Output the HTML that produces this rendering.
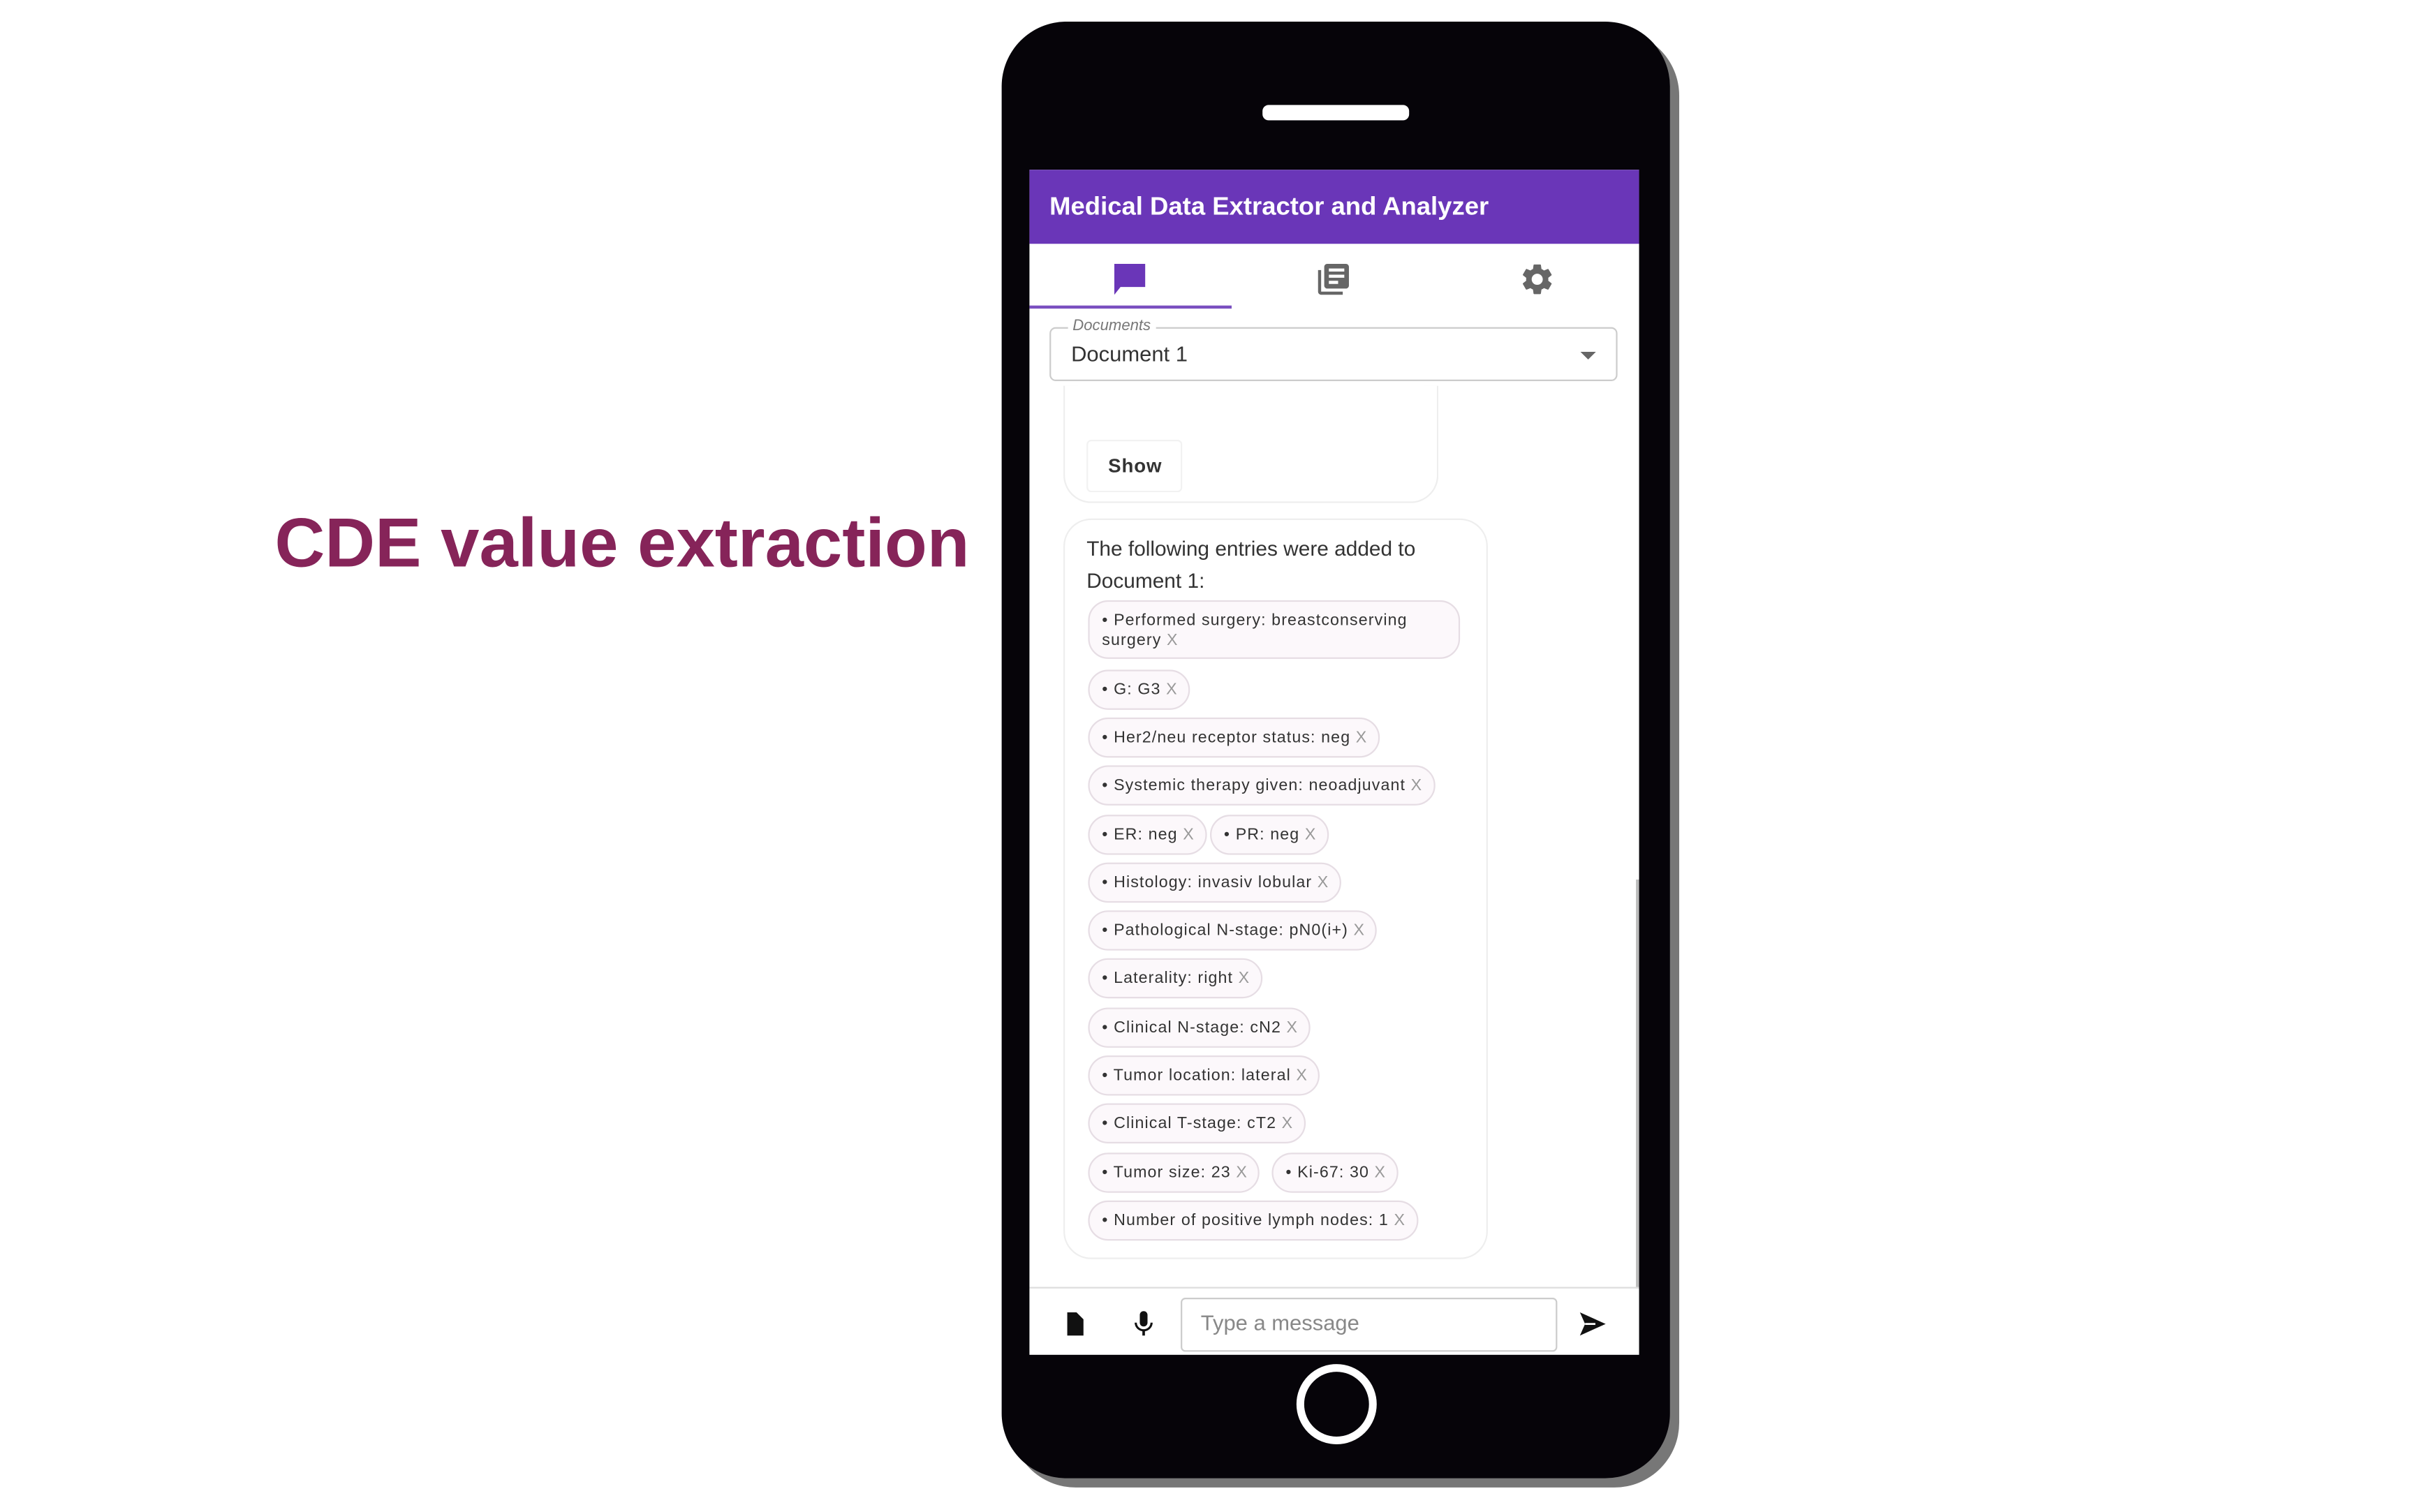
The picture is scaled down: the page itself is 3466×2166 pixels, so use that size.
<!DOCTYPE html>
<html><head><meta charset="utf-8"><style>
html,body{margin:0;padding:0;background:#fff;width:3466px;height:2160px;overflow:hidden}
#w{position:absolute;left:0;top:0;width:1570px;height:980px;transform:scale(2.2105);transform-origin:0 0;font-family:"Liberation Sans",Arial,sans-serif}
.a{position:absolute}
.chip{position:absolute;left:705px;height:24px;border:1px solid #e6dde4;background:#fcf8fb;border-radius:13px;font-size:10.5px;color:#333;line-height:24px;padding:0 7px 0 8px;white-space:nowrap;letter-spacing:.5px}
.chip i{font-style:normal;color:#999}
</style></head><body><div id="w">
<div class="a" style="left:178px;top:326px;font-size:45px;font-weight:bold;color:#862459;white-space:nowrap">CDE value extraction</div>
<div class="a" style="left:655px;top:20px;width:433px;height:944px;border-radius:42px;background:#777"></div>
<div class="a" style="left:649px;top:14px;width:433px;height:944px;border-radius:42px;background:#060409"></div>
<div class="a" style="left:818px;top:68px;width:95px;height:10px;border-radius:4px;background:#fff"></div>
<div class="a" style="left:840px;top:884px;width:42px;height:42px;border-radius:50%;border:5px solid #fff"></div>
<div class="a" style="left:667px;top:110px;width:395px;height:768px;background:#fff;overflow:hidden">
 <div class="a" style="left:0;top:0;width:395px;height:48px;background:#6a36b8"></div>
 <div class="a" style="left:13px;top:15px;color:#fff;font-size:16.5px;font-weight:bold;white-space:nowrap">Medical Data Extractor and Analyzer</div>
 <svg class="a" style="left:53px;top:59px" width="24" height="24" viewBox="0 0 24 24"><path d="M2 2h20v15H6l-4 5z" fill="#6a36b8"/></svg>
 <svg class="a" style="left:185px;top:59px" width="24" height="24" viewBox="0 0 24 24"><path d="M4 6H2v14c0 1.1.9 2 2 2h14v-2H4V6zm16-4H8c-1.1 0-2 .9-2 2v12c0 1.1.9 2 2 2h12c1.1 0 2-.9 2-2V4c0-1.1-.9-2-2-2zm-1 9H9V9h10v2zm-4 4H9v-2h6v2zm4-8H9V5h10v2z" fill="#666"/></svg>
 <svg class="a" style="left:317px;top:59px" width="24" height="24" viewBox="0 0 24 24"><path d="M19.14 12.94c.04-.3.06-.61.06-.94 0-.32-.02-.64-.07-.94l2.030-1.58c.18-.14.23-.41.12-.61l-1.92-3.32c-.12-.22-.37-.29-.59-.22l-2.39.96c-.5-.38-1.03-.7-1.62-.94l-.36-2.54c-.04-.24-.24-.41-.48-.41h-3.84c-.24 0-.43.17-.47.41l-.36 2.54c-.59.24-1.13.57-1.62.94l-2.39-.96c-.22-.08-.47 0-.59.22L2.74 8.87c-.12.21-.08.47.12.61l2.03 1.58c-.05.3-.09.63-.09.94s.02.64.07.94l-2.030 1.58c-.18.14-.23.41-.12.61l1.92 3.32c.12.22.37.29.59.22l2.39-.96c.5.38 1.03.7 1.62.94l.36 2.54c.05.24.24.41.48.41h3.84c.24 0 .44-.17.47-.41l.36-2.54c.59-.24 1.13-.56 1.62-.94l2.39.96c.22.08.47 0 .59-.22l1.92-3.32c.12-.22.07-.47-.12-.61l-2.01-1.58zM12 15.6c-1.98 0-3.6-1.62-3.6-3.6s1.62-3.6 3.6-3.6 3.6 1.62 3.6 3.6-1.62 3.6-3.6 3.6z" fill="#666"/></svg>
 <div class="a" style="left:0;top:88px;width:131px;height:2px;background:#7a4fc0"></div>
 <div class="a" style="left:13px;top:102px;width:366px;height:33px;border:1px solid #ccc;border-radius:4px"></div>
 <div class="a" style="left:25px;top:96px;background:#fff;padding:0 3px;font-size:10px;font-style:italic;color:#777">Documents</div>
 <div class="a" style="left:27px;top:111px;font-size:14px;color:#333">Document 1</div>
 <div class="a" style="left:357px;top:118px;width:0;height:0;border-left:5px solid transparent;border-right:5px solid transparent;border-top:5px solid #666"></div>
 <div class="a" style="left:22px;top:140px;width:241px;height:75px;border:1px solid #eee;border-top:none;border-radius:0 0 18px 18px"></div>
 <div class="a" style="left:37px;top:175px;width:60px;height:32px;border:1px solid #f2f2f2;border-radius:3px;font-size:12.5px;font-weight:bold;color:#333;line-height:32px;text-indent:13px;letter-spacing:.4px">Show</div>
 <div class="a" style="left:22px;top:226px;width:273px;height:478px;border:1px solid #eee;border-radius:18px"></div>
 <div class="a" style="left:37px;top:235px;font-size:13.5px;color:#333;line-height:21px;width:250px">The following entries were added to Document 1:</div>
 <div class="a" style="left:393px;top:460px;width:2px;height:265px;background:#bbb"></div>
 <div class="a" style="left:0;top:724px;width:395px;height:1px;background:#ddd"></div>
 <svg class="a" style="left:20px;top:738px" width="18" height="20" viewBox="0 0 24 24"><path d="M6 2h8l6 6v14H6z" fill="#111"/></svg>
 <svg class="a" style="left:64px;top:737px" width="20" height="22" viewBox="0 0 24 24"><path d="M12 14c1.7 0 3-1.3 3-3V5c0-1.7-1.3-3-3-3S9 3.3 9 5v6c0 1.7 1.3 3 3 3zm5.3-3c0 3-2.5 5.1-5.3 5.1S6.7 14 6.7 11H5c0 3.4 2.7 6.2 6 6.7V21h2v-3.3c3.3-.5 6-3.3 6-6.7h-1.7z" fill="#111"/></svg>
 <div class="a" style="left:98px;top:731px;width:242px;height:33px;border:1px solid #ccc;border-radius:3px"></div>
 <div class="a" style="left:111px;top:739px;font-size:14px;color:#888">Type a message</div>
 <svg class="a" style="left:354px;top:738px" width="22" height="20" viewBox="0 0 24 24"><path d="M2 3l20 9-20 9 4-9z" fill="#111"/><path d="M6 12h8" stroke="#fff" stroke-width="1.5"/></svg>
</div>
<div class="chip" style="top:389px;height:38px;line-height:13px;padding-top:6px;box-sizing:border-box;width:241px;white-space:normal">• Performed surgery: breastconserving surgery <i>X</i></div>
<div class="chip" style="top:434px">• G: G3 <i>X</i></div>
<div class="chip" style="top:465px">• Her2/neu receptor status: neg <i>X</i></div>
<div class="chip" style="top:496px">• Systemic therapy given: neoadjuvant <i>X</i></div>
<div class="chip" style="top:528px">• ER: neg <i>X</i></div>
<div class="chip" style="top:528px;left:784px">• PR: neg <i>X</i></div>
<div class="chip" style="top:559px">• Histology: invasiv lobular <i>X</i></div>
<div class="chip" style="top:590px">• Pathological N-stage: pN0(i+) <i>X</i></div>
<div class="chip" style="top:621px">• Laterality: right <i>X</i></div>
<div class="chip" style="top:653px">• Clinical N-stage: cN2 <i>X</i></div>
<div class="chip" style="top:684px">• Tumor location: lateral <i>X</i></div>
<div class="chip" style="top:715px">• Clinical T-stage: cT2 <i>X</i></div>
<div class="chip" style="top:747px">• Tumor size: 23 <i>X</i></div>
<div class="chip" style="top:747px;left:824px">• Ki-67: 30 <i>X</i></div>
<div class="chip" style="top:778px">• Number of positive lymph nodes: 1 <i>X</i></div>
</div></body></html>
